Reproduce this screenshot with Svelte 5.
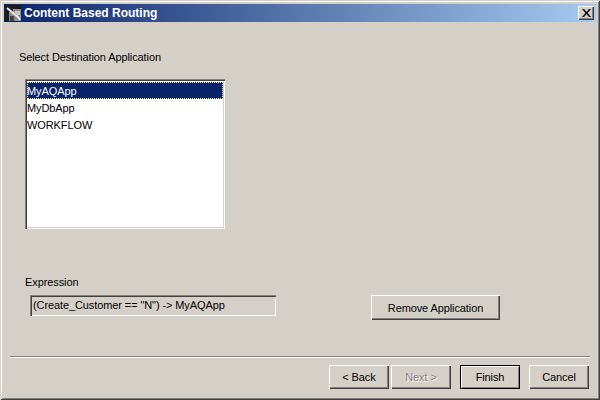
<script>
  const items = ["MyAQApp", "MyDbApp", "WORKFLOW"];
  let selected = $state(0);
</script>

<div class="window">
  <header class="titlebar">
    <svg class="app-icon" width="16" height="16" viewBox="0 0 16 16">
      <rect width="16" height="16" fill="#8c8c8c" />
      <path d="M0 0h16v4H8v3H4v9H0z" fill="#1c1c1c" />
      <path d="M2 3l11 9 2 3" stroke="#e8e8e8" stroke-width="2" fill="none" />
      <path d="M10 6h5v4h-5z" fill="#c8c8c8" />
      <path d="M5 11h4v5H5z" fill="#444" />
    </svg>
    <span class="title">Content Based Routing</span>
    <button class="close" aria-label="Close">
      <svg width="9" height="8" viewBox="0 0 9 8">
        <path d="M0 0h2l2.500 3L7 0h2L5.500 4 9 8H7L4.500 5 2 8H0l3.500-4z" fill="#000" />
      </svg>
    </button>
  </header>

  <main class="body">
    <div class="label select-label">Select Destination Application</div>
    <div class="listbox">
      {#each items as item, i}
        <button class="item" class:selected={i === selected} onclick={() => (selected = i)}>{item}</button>
      {/each}
    </div>

    <div class="label expr-label">Expression</div>
    <div class="expr-row">
      <div class="expr-field">(Create_Customer == "N") -&gt; MyAQApp</div>
      <button class="btn remove">Remove Application</button>
    </div>
  </main>

  <div class="separator"></div>

  <footer class="actions">
    <button class="btn nav">&lt; Back</button>
    <button class="btn nav" disabled>Next &gt;</button>
    <button class="btn nav default">Finish</button>
    <button class="btn nav">Cancel</button>
  </footer>
</div>

<style>
  :global(body) {
    margin: 0;
    background: #d4d0c8;
  }

  .window {
    box-sizing: border-box;
    width: 600px;
    height: 400px;
    padding: 4px;
    background: #d4d0c8;
    display: flex;
    flex-direction: column;
    font-family: "Liberation Sans", Arial, sans-serif;
    font-size: 11px;
    letter-spacing: -0.1px;
    color: #000;
    box-shadow: inset 1px 1px 0 #d4d0c8, inset -1px -1px 0 #404040, inset 2px 2px 0 #fff, inset -2px -2px 0 #808080;
  }

  .titlebar {
    flex: none;
    height: 18px;
    display: flex;
    align-items: center;
    padding: 0 2px 0 1px;
    background: linear-gradient(to right, #0a246a, #a6caf0);
  }

  .app-icon {
    flex: none;
    margin-right: 3px;
  }

  .title {
    flex: 1;
    color: #fff;
    font-weight: bold;
    font-size: 12px;
    letter-spacing: 0;
    white-space: nowrap;
  }

  .close {
    width: 16px;
    height: 14px;
    padding: 0;
    border: 0;
    background: #d4d0c8;
    display: flex;
    align-items: center;
    justify-content: center;
    box-shadow: inset 1px 1px 0 #fff, inset -1px -1px 0 #404040, inset -2px -2px 0 #808080;
  }

  .body {
    flex: 1;
    padding: 0 4px;
  }

  .label {
    height: 13px;
    line-height: 13px;
    font-size: 11px;
  }

  .select-label {
    margin: 29px 0 0 11px;
  }

  .listbox {
    box-sizing: border-box;
    width: 200px;
    height: 150px;
    margin: 15px 0 0 17px;
    padding: 3px 2px 2px;
    background: #fff;
    display: flex;
    flex-direction: column;
    box-shadow: inset 1px 1px 0 #808080, inset 2px 2px 0 #404040, inset -1px -1px 0 #fff, inset -2px -2px 0 #d4d0c8;
  }

  .item {
    flex: none;
    height: 17px;
    padding: 0;
    border: 0;
    background: none;
    font: inherit;
    letter-spacing: inherit;
    color: #000;
    text-align: left;
  }

  .item.selected {
    background: #0a246a;
    color: #fff;
    outline: 1px dotted #fff;
    outline-offset: -1px;
  }

  .expr-label {
    margin: 47px 0 0 17px;
  }

  .expr-row {
    display: flex;
    align-items: flex-start;
    margin: 6px 0 0 22px;
  }

  .expr-field {
    box-sizing: border-box;
    width: 246px;
    height: 21px;
    line-height: 21px;
    padding-left: 3px;
    background: #d4d0c8;
    white-space: nowrap;
    box-shadow: inset 1px 1px 0 #808080, inset 2px 2px 0 #404040, inset -1px -1px 0 #fff;
  }

  .btn {
    box-sizing: border-box;
    padding: 0;
    border: 0;
    background: #d4d0c8;
    font: inherit;
    letter-spacing: inherit;
    color: #000;
    box-shadow: inset 1px 1px 0 #fff, inset -1px -1px 0 #404040, inset -2px -2px 0 #808080;
  }

  .remove {
    width: 129px;
    height: 25px;
    margin-left: 95px;
  }

  .separator {
    flex: none;
    height: 1px;
    margin: 0 6px;
    background: #808080;
    border-bottom: 1px solid #fff;
  }

  .actions {
    flex: none;
    display: flex;
    height: 24px;
    padding: 7px 7px 7px 325px;
    gap: 2px;
  }

  .nav {
    width: 60px;
    height: 24px;
  }

  .nav:disabled {
    color: #808080;
    text-shadow: 1px 1px 0 #fff;
  }

  .nav.default {
    margin-left: 7px;
    margin-right: 7px;
    box-shadow: inset 0 0 0 1px #000, inset 2px 2px 0 #fff, inset -2px -2px 0 #808080;
  }
</style>
